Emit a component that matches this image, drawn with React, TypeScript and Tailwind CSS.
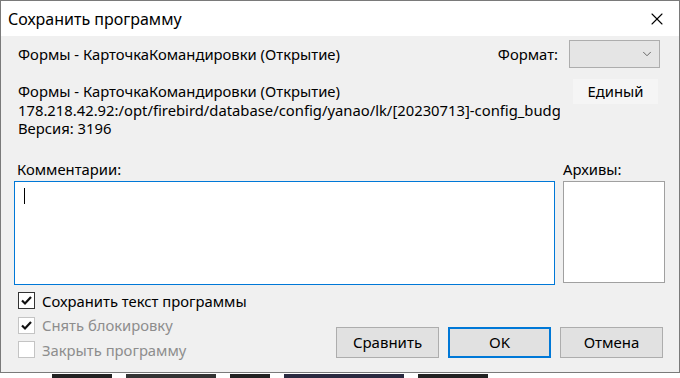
import { ChevronDown, X } from "lucide-react";

const font = { fontFamily: '"Noto Sans", "Liberation Sans", sans-serif' };

function Check({ checked, disabled, label }: { checked?: boolean; disabled?: boolean; label: string }) {
  return (
    <div className="flex h-[24.5px] items-center">
      <div
        className={
          "flex h-[17px] w-[17px] items-center justify-center border bg-white " +
          (disabled ? "border-[#c4c4c4]" : "border-[#333]")
        }
      >
        {checked && (
          <svg width="13" height="13" viewBox="0 0 13 13">
            <path d="M2 6.5 L5 9.5 L11 3" fill="none" stroke="#111" strokeWidth="2.2" />
          </svg>
        )}
      </div>
      <span className={"ml-[7px] text-[14.8px] " + (disabled ? "text-[#8d8d8d]" : "text-black")}>{label}</span>
    </div>
  );
}

function Btn({ label, primary }: { label: string; primary?: boolean }) {
  return (
    <div
      className={
        "flex h-[31px] w-[103px] items-center justify-center bg-[#e1e1e1] text-[15px] text-black " +
        (primary ? "border-2 border-[#0078d7]" : "border border-[#adadad]")
      }
    >
      {label}
    </div>
  );
}

export default function App() {
  return (
    <div className="relative h-[378px] w-[680px] overflow-hidden bg-white" style={font}>
      <div className="flex h-[373px] flex-col border border-[#7a7a7a]">
        {/* title bar */}
        <div className="flex h-[35px] items-center justify-between bg-white pl-[7px] pr-[12px]">
          <span className="text-[16px] text-black">Сохранить программу</span>
          <X size={20} strokeWidth={1.3} className="text-black" />
        </div>

        {/* body */}
        <div className="flex flex-1 flex-col bg-[#f0f0f0] pl-[13px] pr-[14px] text-[14.8px] text-black">
          <div className="mt-[4px] flex h-[28px] items-center">
            <span className="ml-[4px] flex-1">Формы - КарточкаКомандировки (Открытие)</span>
            <span>Формат:</span>
            <div className="ml-[11px] mr-[5px] flex h-[28px] w-[91px] items-center justify-end border border-[#adadad] bg-[#e5e5e5] pr-[5px]">
              <ChevronDown size={14} strokeWidth={1.5} className="text-[#555]" />
            </div>
          </div>

          <div className="flex">
            <div className="w-[546px] overflow-hidden whitespace-nowrap pl-[4px] pt-[14px] leading-[18.5px]">
              <div>Формы - КарточкаКомандировки (Открытие)</div>
              <div>178.218.42.92:/opt/firebird/database/config/yanao/lk/[20230713]-config_budget.fdb</div>
              <div>Версия: 3196</div>
            </div>
            <div className="ml-[13px] mt-[11px] flex h-[25px] w-[85px] items-center justify-center bg-[#f5f5f5]">
              Единый
            </div>
          </div>

          <div className="mt-[21px] flex">
            <div className="flex w-[541px] flex-col">
              <span className="ml-[3px] h-[20px] leading-[20px]">Комментарии:</span>
              <div className="mt-[2px] h-[104px] border border-[#0078d7] bg-white pl-[9px] pt-[6px]">
                <div className="h-[16px] w-[1px] bg-black" />
              </div>
            </div>
            <div className="ml-[8px] flex flex-1 flex-col">
              <span className="h-[20px] leading-[20px]">Архивы:</span>
              <div className="mt-[2px] h-[102px] border border-[#a0a0a0] bg-white" />
            </div>
          </div>

          <div className="mt-[4px] flex">
            <div className="ml-[4px] flex w-[318px] flex-col">
              <Check checked label="Сохранить текст программы" />
              <Check checked disabled label="Снять блокировку" />
              <Check disabled label="Закрыть программу" />
            </div>
            <div className="mt-[38px] flex gap-[9px]">
              <Btn label="Сравнить" />
              <Btn label="OK" primary />
              <Btn label="Отмена" />
            </div>
          </div>
        </div>
      </div>
      {/* fragments of the window behind */}
      <div className="flex gap-[14px] pl-[52px] pt-[1px]">
        <div className="h-[4px] w-[60px] bg-[#222]" />
        <div className="h-[4px] w-[90px] bg-[#333]" />
        <div className="h-[4px] w-[40px] bg-[#222]" />
        <div className="h-[4px] w-[120px] bg-[#2a2a40]" />
        <div className="h-[4px] w-[70px] bg-[#222]" />
      </div>
    </div>
  );
}
